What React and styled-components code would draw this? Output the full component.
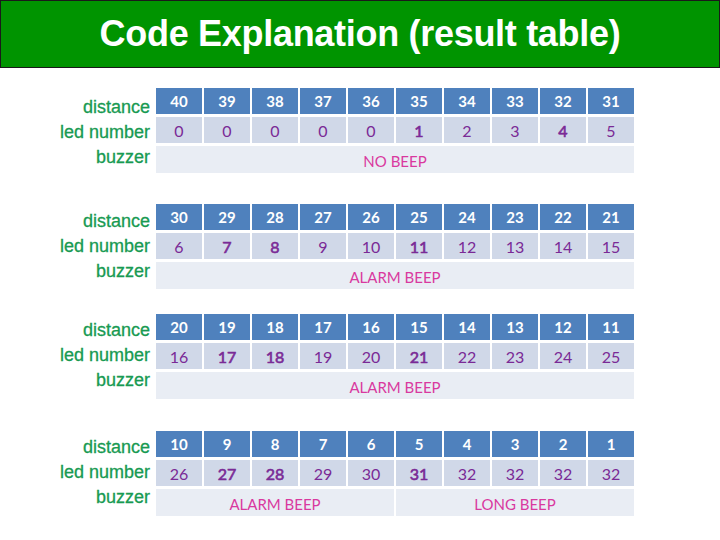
import React from "react";
import styled, { createGlobalStyle } from "styled-components";

const Global = createGlobalStyle`
  html, body { margin: 0; padding: 0; background: #ffffff; }
  body { width: 720px; height: 540px; overflow: hidden; font-family: "Liberation Sans", Arial, sans-serif; }
`;

const Page = styled.div`
  width: 720px;
  height: 540px;
  display: flex;
  flex-direction: column;
  background: #ffffff;
`;

const TitleBar = styled.header`
  box-sizing: border-box;
  height: 68px;
  background: #009400;
  border: 1px solid #1a1a1a;
  display: flex;
  align-items: center;
  justify-content: center;
`;

const Title = styled.h1`
  margin: 0;
  color: #ffffff;
  font-family: "Liberation Sans", Arial, sans-serif;
  font-weight: 700;
  font-size: 36px;
  line-height: 1;
  letter-spacing: -0.3px;
`;

const Body = styled.main`
  display: flex;
  flex-direction: column;
  padding-top: 20px;
`;

const Section = styled.section`
  display: flex;
  align-items: flex-start;
  margin-top: ${(p) => p.$top}px;
`;

const Labels = styled.div`
  width: 150px;
  padding-top: ${(p) => p.$pad}px;
  display: flex;
  flex-direction: column;
  align-items: flex-end;
  color: #189a52;
  font-family: "Liberation Sans", Arial, sans-serif;
  font-size: 18px;
  line-height: 25px;
  -webkit-text-stroke: 0.3px #189a52;
`;

const Grid = styled.div`
  margin-left: 6px;
  display: grid;
  grid-template-columns: repeat(10, 46px);
  grid-template-rows: 26px 26px 27px;
  column-gap: 2px;
  row-gap: 3px;
  font-family: Lato, "Open Sans", sans-serif;
`;

const HeadCell = styled.div`
  background: #4f81bd;
  color: #ffffff;
  font-weight: 700;
  font-size: 15px;
  display: flex;
  align-items: center;
  justify-content: center;
`;

const LedCell = styled.div`
  background: #d0d8e8;
  color: #7a2a96;
  font-weight: 400;
  font-size: 16px;
  -webkit-text-stroke: ${(p) => (p.$strong ? "0.6px #7a2a96" : "0")};
  display: flex;
  align-items: center;
  justify-content: center;
`;

const BuzzCell = styled.div`
  grid-column: span ${(p) => p.$span};
  background: #e9edf4;
  color: #d9399f;
  font-size: 15px;
  display: flex;
  align-items: center;
  justify-content: center;
  padding-top: 2px;
`;

const sections = [
  {
    top: 0,
    pad: 7,
    dist: [40, 39, 38, 37, 36, 35, 34, 33, 32, 31],
    led: [0, 0, 0, 0, 0, 1, 2, 3, 4, 5],
    strong: [1, 4],
    buzz: [{ text: "NO BEEP", span: 10 }],
  },
  {
    top: 31,
    pad: 5,
    dist: [30, 29, 28, 27, 26, 25, 24, 23, 22, 21],
    led: [6, 7, 8, 9, 10, 11, 12, 13, 14, 15],
    strong: [7, 8, 11],
    buzz: [{ text: "ALARM BEEP", span: 10 }],
  },
  {
    top: 25,
    pad: 4,
    dist: [20, 19, 18, 17, 16, 15, 14, 13, 12, 11],
    led: [16, 17, 18, 19, 20, 21, 22, 23, 24, 25],
    strong: [17, 18, 21],
    buzz: [{ text: "ALARM BEEP", span: 10 }],
  },
  {
    top: 32,
    pad: 4,
    dist: [10, 9, 8, 7, 6, 5, 4, 3, 2, 1],
    led: [26, 27, 28, 29, 30, 31, 32, 32, 32, 32],
    strong: [27, 28, 31],
    buzz: [
      { text: "ALARM BEEP", span: 5 },
      { text: "LONG BEEP", span: 5 },
    ],
  },
];

export default function App() {
  return (
    <Page>
      <Global />
      <TitleBar>
        <Title>Code Explanation (result table)</Title>
      </TitleBar>
      <Body>
        {sections.map((s, i) => (
          <Section key={i} $top={s.top}>
            <Labels $pad={s.pad}>
              <span>distance</span>
              <span>led number</span>
              <span>buzzer</span>
            </Labels>
            <Grid>
              {s.dist.map((d, j) => (
                <HeadCell key={"d" + j}>{d}</HeadCell>
              ))}
              {s.led.map((l, j) => (
                <LedCell key={"l" + j} $strong={s.strong.includes(l)}>
                  {l}
                </LedCell>
              ))}
              {s.buzz.map((b, j) => (
                <BuzzCell key={"b" + j} $span={b.span}>
                  {b.text}
                </BuzzCell>
              ))}
            </Grid>
          </Section>
        ))}
      </Body>
    </Page>
  );
}
